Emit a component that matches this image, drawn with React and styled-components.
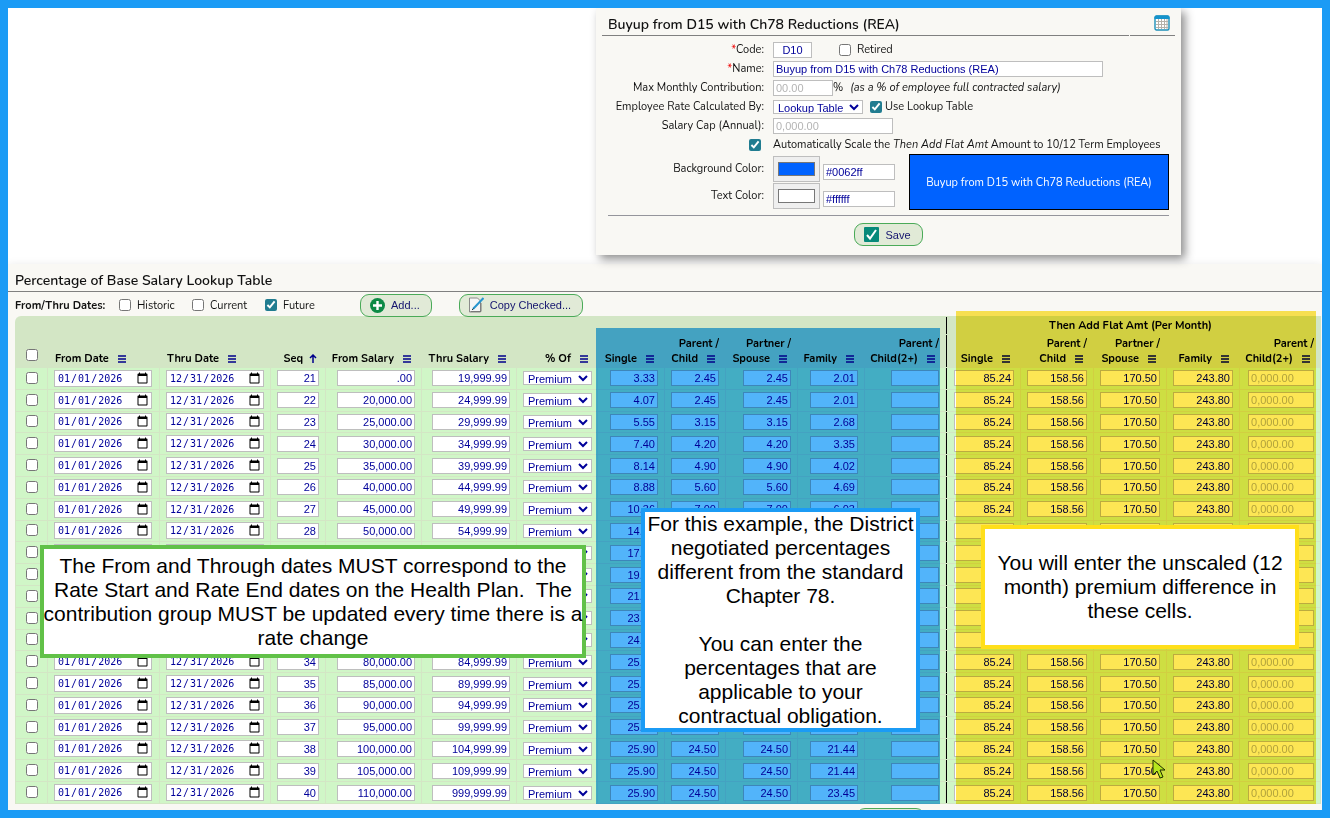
import React from 'react';
import styled, { createGlobalStyle, css } from 'styled-components';

const GlobalStyle = createGlobalStyle`
  * {
    box-sizing: border-box;
  }
  body {
    margin: 0;
    background: #fff;
    color: #111;
    font-family: Nunito, 'Open Sans', sans-serif;
    font-size: 11px;
    line-height: 15px;
  }
`;

const Frame = styled.div`
  position: relative;
  display: flex;
  flex-direction: column;
  height: 100vh;
  border: 8px solid #1b9bf5;
  overflow: hidden;
`;

const field = css`
  height: 16px;
  margin: 0;
  padding: 0 2px;
  border: 1px solid #bebebe;
  border-radius: 0;
  background: #fff;
  color: #00009a;
  font-family: 'Liberation Sans', Arial, sans-serif;
  font-size: 11px;
  outline: none;
  &::placeholder {
    color: #b4b4b4;
  }
`;

const TextInput = styled.input`
  ${field}
  display: block;
  width: ${(p) => p.$w || 48}px;
  text-align: ${(p) => p.$align || 'left'};
`;

const DateInput = styled.input`
  ${field}
  display: block;
  width: 98px;
  height: 17px;
  font-family: 'DejaVu Sans Mono', monospace;
  font-size: 10px;
  &::-webkit-calendar-picker-indicator {
    width: 13px;
    height: 13px;
    padding: 0;
    margin-left: 0;
  }
`;

const Select = styled.select`
  ${field}
  display: block;
  width: ${(p) => p.$w}px;
  height: 14px;
  padding: 0;
  line-height: 12px;
`;

const Checkbox = styled.input.attrs({ type: 'checkbox' })`
  display: block;
  flex: none;
  width: 12px;
  height: 12px;
  margin: 0;
  accent-color: #217c90;
`;

const ColorInput = styled.input.attrs({ type: 'color' })`
  width: 47px;
  height: 26px;
  padding: 0;
  border: 1px solid #bebebe;
  background: #efefef;
  &::-webkit-color-swatch-wrapper {
    padding: 5px 4px;
  }
`;

const Button = styled.button`
  display: flex;
  align-items: center;
  gap: 6px;
  height: 23px;
  padding: 0 11px 0 9px;
  border: 1px solid #4aaa58;
  border-radius: 9px;
  background: #e1ead7;
  color: #14146e;
  font-family: 'Liberation Sans', Arial, sans-serif;
  font-size: 11px;
`;

/* contribution group card */

const Card = styled.form`
  z-index: 1;
  width: 585px;
  margin-left: 588px;
  padding-bottom: 9px;
  background: #f9f8f4;
  box-shadow: 4px 4px 9px rgba(0, 0, 0, 0.45);
`;

const CardHead = styled.div`
  display: flex;
  gap: 1px;
  height: 28px;
  margin: 0 6px 4px;
`;

const Title = styled.h2`
  flex: 1;
  margin: 0;
  padding: 7px 6px 0;
  border-bottom: 1px solid #808080;
  font-size: 14px;
  font-weight: 600;
  line-height: 20px;
`;

const HeadIcon = styled.div`
  display: flex;
  align-items: center;
  justify-content: center;
  width: 45px;
  padding: 2px 0 0 18px;
  border-bottom: 1px solid #808080;
`;

const FormRow = styled.div`
  display: grid;
  grid-template-columns: 168px 1fr;
  align-items: center;
  column-gap: 9px;
  height: ${(p) => p.$h || 19}px;
`;

const Label = styled.label`
  text-align: right;
  white-space: nowrap;
`;

const Required = styled.span`
  color: #e00;
`;

const Controls = styled.div`
  display: flex;
  align-items: center;
  white-space: nowrap;
`;

const Check = styled.label`
  display: flex;
  align-items: center;
  gap: ${(p) => p.$gap || 6}px;
  margin-left: ${(p) => p.$left || 0}px;
`;

const Hint = styled.em`
  margin-left: 7px;
`;

const CheckCell = styled.div`
  display: flex;
  justify-content: flex-end;
  padding-right: 3px;
`;

const Colors = styled.div`
  display: flex;
  gap: 14px;
  padding-top: 1px;
`;

const ColorControls = styled.div`
  display: flex;
  align-items: flex-end;
  gap: 3px;
  ${TextInput} {
    margin-bottom: 2px;
  }
`;

const Preview = styled.div`
  display: flex;
  align-items: center;
  justify-content: center;
  flex: 1;
  margin: -1px 12px 0 0;
  height: 56px;
  border: 1px solid #000;
  background: #0062ff;
  color: #fff;
`;

const Rule = styled.hr`
  margin: 5px 12px 7px;
  border: 0;
  border-top: 1px solid #95959c;
`;

const Actions = styled.div`
  display: flex;
  justify-content: center;
`;

/* lookup table */

const Section = styled.section`
  margin-top: 9px;
  flex: 1;
  background: #f9f8f4;
  box-shadow: 0 0 8px rgba(0, 0, 0, 0.08);
`;

const SectionTitle = styled(Title)`
  padding: 7px 7px 0;
`;

const Filters = styled.div`
  display: flex;
  align-items: center;
  height: 24px;
  padding: 2px 7px 0;
`;

const FilterName = styled.strong`
  width: 91px;
  margin-right: 13px;
  font-weight: 700;
  white-space: nowrap;
`;

const Filter = styled(Check)`
  width: 73px;
`;

const FilterButton = styled(Button)`
  margin-left: ${(p) => p.$left}px;
`;

const TableWrap = styled.div`
  padding: 0 1px 0 7px;
`;

const Table = styled.table`
  width: 100%;
  height: 488px;
  table-layout: fixed;
  border-collapse: separate;
  border-spacing: 1px;
  border-radius: 6px 0 0 0;
  background: #d3e6c5;
`;

const Th = styled.th`
  height: ${(p) => p.$h || 32}px;
  padding: 0 ${(p) => (p.$tight ? 5 : 6)}px 1px ${(p) => (p.$left ? 7 : 0)}px;
  border-left: ${(p) => (p.$divide ? '1px solid #000' : 0)};
  text-align: ${(p) => (p.$left ? 'left' : 'right')};
  vertical-align: bottom;
  font-weight: 700;
  color: #000;
  white-space: pre-line;
`;

const GroupTh = styled(Th)`
  text-align: center;
`;

const Sort = styled.svg`
  width: 8px;
  height: 8px;
  margin: 0 4px -1px 9px;
  stroke: #00008b;
  fill: none;
`;

const SortUp = styled(Sort)`
  height: 9px;
  margin: 0 2px -1px 6px;
`;

const Td = styled.td`
  padding: 0 6px;
  border-left: ${(p) => (p.$divide ? '1px solid #000' : 0)};
  background: #d0f6c7;
  ${TextInput}, ${Select} {
    margin-left: auto;
  }
`;

const PickCell = styled(Td)`
  padding: 0 10px 1px;
`;

const PickAll = styled(Th)`
  padding: 0 10px 6px;
`;

const BottomBar = styled.div`
  display: flex;
  padding: 4px 0 0 848px;
`;

const BottomButton = styled(Button)`
  width: 69px;
`;

/* annotations laid over the screen */

const Highlight = styled.div`
  position: absolute;
  z-index: 2;
  left: ${(p) => p.$x}px;
  top: ${(p) => p.$y}px;
  width: ${(p) => p.$w}px;
  height: ${(p) => p.$h}px;
  background: ${(p) => p.$color};
  mix-blend-mode: multiply;
  pointer-events: none;
`;

const Callout = styled.div`
  position: absolute;
  z-index: 3;
  left: ${(p) => p.$x}px;
  top: ${(p) => p.$y}px;
  display: flex;
  align-items: center;
  justify-content: center;
  width: ${(p) => p.$w}px;
  height: ${(p) => p.$h}px;
  border: 4px solid ${(p) => p.$color};
  background: #fff;
  color: #000;
  font-family: 'Liberation Sans', Arial, sans-serif;
  font-size: 21px;
  line-height: 24px;
  text-align: center;
  white-space: pre;
`;

const Pointer = styled.svg`
  position: absolute;
  z-index: 4;
  left: 1144px;
  top: 751px;
  width: 14px;
  height: 20px;
`;

const columns = [
  { w: 31 },
  { w: 111, label: 'From Date', left: true },
  { w: 110, label: 'Thru Date', left: true },
  { w: 54, label: 'Seq', up: true },
  { w: 95, label: 'From Salary' },
  { w: 94, label: 'Thru Salary' },
  { w: 80, label: '% Of', tight: true },
  { w: 66, label: 'Single' },
  { w: 60, label: 'Parent /\nChild' },
  { w: 71, label: 'Partner /\nSpouse' },
  { w: 66, label: 'Family' },
  { w: 80, label: 'Parent /\nChild(2+)' },
  { w: 74, label: 'Single', divide: true },
  { w: 72, label: 'Parent /\nChild' },
  { w: 72, label: 'Partner /\nSpouse' },
  { w: 72, label: 'Family' },
  { w: 80, label: 'Parent /\nChild(2+)' },
];

const rates = [
  ['3.33', '2.45', '2.45', '2.01'],
  ['4.07', '2.45', '2.45', '2.01'],
  ['5.55', '3.15', '3.15', '2.68'],
  ['7.40', '4.20', '4.20', '3.35'],
  ['8.14', '4.90', '4.90', '4.02'],
  ['8.88', '5.60', '5.60', '4.69'],
  ['10.36', '7.00', '7.00', '6.03'],
  ['14.80', '8.40', '8.40', '7.37'],
  ['17.02', '10.50', '10.50', '8.04'],
  ['19.98', '11.90', '11.90', '9.38'],
  ['21.46', '13.30', '13.30', '10.72'],
  ['23.68', '15.40', '15.40', '12.06'],
  ['24.42', '16.10', '16.10', '12.73'],
  ['25.16', '18.20', '18.20', '14.07'],
  ['25.16', '19.60', '19.60', '15.41'],
  ['25.90', '21.00', '21.00', '16.08'],
  ['25.90', '23.10', '23.10', '18.76'],
  ['25.90', '24.50', '24.50', '21.44'],
  ['25.90', '24.50', '24.50', '21.44'],
  ['25.90', '24.50', '24.50', '23.45'],
];

const flatAmounts = ['85.24', '158.56', '170.50', '243.80'];

const money = (n) => `${n.toLocaleString('en-US')}.00`;

const rows = rates.map((rate, i) => {
  const from = i === 0 ? 0 : 15000 + i * 5000;
  const thru = i === 19 ? 999999 : 19999 + i * 5000;
  return {
    seq: 21 + i,
    from: from ? money(from) : '.00',
    thru: `${thru.toLocaleString('en-US')}.99`,
    rate,
  };
});

const SortIcon = ({ up }) =>
  up ? (
    <SortUp viewBox="0 0 8 9" aria-hidden="true">
      <path d="M4 9V1M1 4l3-3 3 3" strokeWidth="1.5" />
    </SortUp>
  ) : (
    <Sort viewBox="0 0 8 8" aria-hidden="true">
      <path d="M0 1h8M0 4h8M0 7h8" strokeWidth="1.5" />
    </Sort>
  );

const CalendarIcon = () => (
  <svg width="16" height="16" viewBox="0 0 16 16" aria-hidden="true">
    <rect x="1" y="1" width="14" height="14" rx="1.5" fill="#fff" stroke="#1d8fb8" strokeWidth="1.4" />
    <path d="M.5 2.5q0-2 2-2h11q2 0 2 2V4H.5z" fill="#1593cc" />
    <path d="M2 6.5h12M2 9.5h12M2 12.5h12M4.5 4v10M7.5 4v10M10.5 4v10M13 4v10" stroke="#b5b1a9" />
  </svg>
);

const SaveIcon = () => (
  <svg width="15" height="15" viewBox="0 0 15 15" aria-hidden="true">
    <rect width="15" height="15" rx="1" fill="#07897a" />
    <path d="M3 8l3 3.5L12 3" fill="none" stroke="#fff" strokeWidth="2" />
  </svg>
);

const AddIcon = () => (
  <svg width="15" height="15" viewBox="0 0 15 15" aria-hidden="true">
    <circle cx="7.5" cy="7.5" r="7.5" fill="#0c8a45" />
    <path d="M7.5 3v9M3 7.5h9" stroke="#fff" strokeWidth="2.4" />
  </svg>
);

const CopyIcon = () => (
  <svg width="15" height="16" viewBox="0 0 15 16" aria-hidden="true">
    <path d="M.5 1h8l3 3v11H.5z" fill="#f6f6f6" stroke="#8a8a8a" />
    <path d="M1.5 14.5H12V6" fill="none" stroke="#777" />
    <path d="M4 12L14.5 1" stroke="#2795cf" strokeWidth="2" />
    <path d="M3 13l1.5-1.5" stroke="#333" />
  </svg>
);

const GroupForm = () => (
  <Card onSubmit={(e) => e.preventDefault()}>
    <CardHead>
      <Title>Buyup from D15 with Ch78 Reductions (REA)</Title>
      <HeadIcon>
        <CalendarIcon />
      </HeadIcon>
    </CardHead>
    <FormRow>
      <Label htmlFor="code"><Required>*</Required>Code:</Label>
      <Controls>
        <TextInput id="code" $w={39} $align="center" defaultValue="D10" />
        <Check $left={27}>
          <Checkbox />
          Retired
        </Check>
      </Controls>
    </FormRow>
    <FormRow>
      <Label htmlFor="name"><Required>*</Required>Name:</Label>
      <TextInput id="name" $w={330} defaultValue="Buyup from D15 with Ch78 Reductions (REA)" />
    </FormRow>
    <FormRow>
      <Label htmlFor="max">Max Monthly Contribution:</Label>
      <Controls>
        <TextInput id="max" $w={60} placeholder="00.00" />%
        <Hint>(as a % of employee full contracted salary)</Hint>
      </Controls>
    </FormRow>
    <FormRow>
      <Label htmlFor="calc">Employee Rate Calculated By:</Label>
      <Controls>
        <Select id="calc" $w={90}>
          <option>Lookup Table</option>
        </Select>
        <Check $left={7} $gap={3}>
          <Checkbox defaultChecked />
          Use Lookup Table
        </Check>
      </Controls>
    </FormRow>
    <FormRow>
      <Label htmlFor="cap">Salary Cap (Annual):</Label>
      <TextInput id="cap" $w={120} placeholder="0,000.00" />
    </FormRow>
    <FormRow>
      <CheckCell>
        <Checkbox id="scale" defaultChecked />
      </CheckCell>
      <label htmlFor="scale">
        Automatically Scale the <em>Then Add Flat Amt</em> Amount to 10/12 Term Employees
      </label>
    </FormRow>
    <Colors>
      <div>
        <FormRow $h={27}>
          <Label htmlFor="bg">Background Color:</Label>
          <ColorControls>
            <ColorInput id="bg" defaultValue="#0062ff" />
            <TextInput $w={72} aria-label="Background color code" defaultValue="#0062ff" />
          </ColorControls>
        </FormRow>
        <FormRow $h={27}>
          <Label htmlFor="fg">Text Color:</Label>
          <ColorControls>
            <ColorInput id="fg" defaultValue="#ffffff" />
            <TextInput $w={72} aria-label="Text color code" defaultValue="#ffffff" />
          </ColorControls>
        </FormRow>
      </div>
      <Preview>Buyup from D15 with Ch78 Reductions (REA)</Preview>
    </Colors>
    <Rule />
    <Actions>
      <Button type="submit">
        <SaveIcon />
        Save
      </Button>
    </Actions>
  </Card>
);

const LookupRow = ({ row }) => (
  <tr>
    <PickCell>
      <Checkbox aria-label={`Row ${row.seq}`} />
    </PickCell>
    <Td>
      <DateInput type="date" aria-label="From date" defaultValue="2026-01-01" />
    </Td>
    <Td>
      <DateInput type="date" aria-label="Thru date" defaultValue="2026-12-31" />
    </Td>
    <Td>
      <TextInput $w={42} $align="right" aria-label="Seq" defaultValue={row.seq} />
    </Td>
    <Td>
      <TextInput $w={78} $align="right" aria-label="From salary" defaultValue={row.from} />
    </Td>
    <Td>
      <TextInput $w={78} $align="right" aria-label="Thru salary" defaultValue={row.thru} />
    </Td>
    <Td>
      <Select $w={69} aria-label="Percent of">
        <option>Premium</option>
      </Select>
    </Td>
    {[...row.rate, ''].map((value, i) => (
      <Td key={i}>
        <TextInput $align="right" aria-label={`Rate ${i + 1}`} defaultValue={value} />
      </Td>
    ))}
    {flatAmounts.map((value, i) => (
      <Td key={i} $divide={i === 0}>
        <TextInput $w={60} $align="right" aria-label={`Flat amount ${i + 1}`} defaultValue={value} />
      </Td>
    ))}
    <Td>
      <TextInput $w={66} aria-label="Flat amount 5" placeholder="0,000.00" />
    </Td>
  </tr>
);

const LookupTable = () => (
  <Section>
    <SectionTitle>Percentage of Base Salary Lookup Table</SectionTitle>
    <Filters>
      <FilterName>From/Thru Dates:</FilterName>
      <Filter>
        <Checkbox />
        Historic
      </Filter>
      <Filter>
        <Checkbox />
        Current
      </Filter>
      <Filter>
        <Checkbox defaultChecked />
        Future
      </Filter>
      <FilterButton type="button" $left={22}>
        <AddIcon />
        Add...
      </FilterButton>
      <FilterButton type="button" $left={27}>
        <CopyIcon />
        Copy Checked...
      </FilterButton>
    </Filters>
    <TableWrap>
      <Table>
        <colgroup>
          {columns.map((c, i) => (
            <col key={i} width={c.w} />
          ))}
        </colgroup>
        <thead>
          <tr>
            <Th as="td" $h={17} colSpan={12} />
            <GroupTh $h={17} colSpan={5} $divide>
              Then Add Flat Amt (Per Month)
            </GroupTh>
          </tr>
          <tr>
            <PickAll>
              <Checkbox aria-label="Select all rows" />
            </PickAll>
            {columns.slice(1).map((c, i) => (
              <Th key={i} $left={c.left} $tight={c.tight} $divide={c.divide}>
                {c.label}
                <SortIcon up={c.up} />
              </Th>
            ))}
          </tr>
        </thead>
        <tbody>
          {rows.map((row) => (
            <LookupRow key={row.seq} row={row} />
          ))}
        </tbody>
      </Table>
    </TableWrap>
    <BottomBar>
      <BottomButton type="button" aria-label="Save" />
    </BottomBar>
  </Section>
);

const App = () => (
  <>
    <GlobalStyle />
    <Frame>
      <GroupForm />
      <LookupTable />
      <Highlight $x={588} $y={320} $w={344} $h={476} $color="#52b4fa" />
      <Highlight $x={948} $y={303} $w={360} $h={493} $color="#fde654" />
      <Callout $x={32} $y={537} $w={546} $h={113} $color="#61c148">
        {'The From and Through dates MUST correspond to the\nRate Start and Rate End dates on the Health Plan.  The\ncontribution group MUST be updated every time there is a\nrate change'}
      </Callout>
      <Callout $x={633} $y={500} $w={279} $h={224} $color="#1b9bf5">
        {'For this example, the District\nnegotiated percentages\ndifferent from the standard\nChapter 78.\n\nYou can enter the\npercentages that are\napplicable to your\ncontractual obligation.'}
      </Callout>
      <Callout $x={973} $y={517} $w={318} $h={124} $color="#ffdf1a">
        {'You will enter the unscaled (12\nmonth) premium difference in\nthese cells.'}
      </Callout>
      <Pointer viewBox="0 0 14 20" aria-hidden="true">
        <path d="M1 1v15l4-4 3 7 3-1-3-7h5z" fill="#b6e61d" stroke="#1c2a00" />
      </Pointer>
    </Frame>
  </>
);

export default App;
